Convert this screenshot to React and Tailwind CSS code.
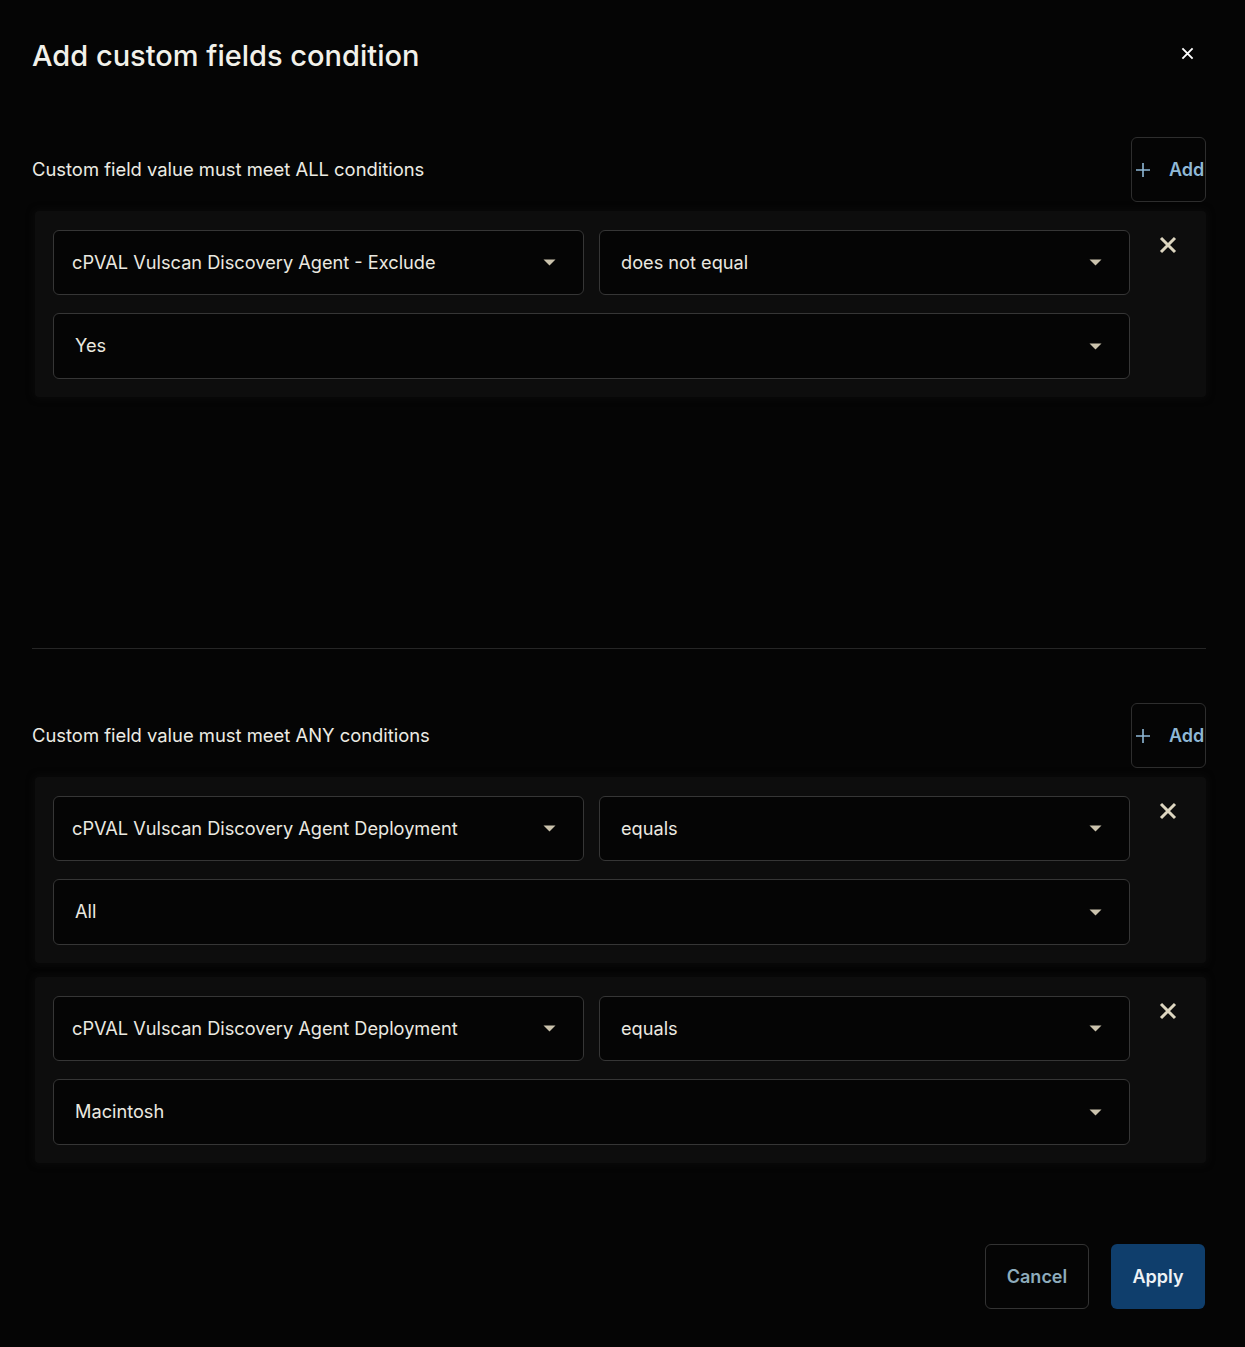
import React from 'react';

const font = { fontFamily: 'Inter, "Noto Sans", sans-serif' };

function Caret() {
  return (
    <svg width="13" height="7" viewBox="0 0 13 7" className="shrink-0">
      <path d="M0.5 0.5 H12.5 L6.5 6.5 Z" fill="#cbc3ad" />
    </svg>
  );
}

function Cross({ size = 18, stroke = 3, color = '#ddd6c0' }) {
  return (
    <svg width={size} height={size} viewBox="0 0 18 18">
      <path d="M2 2 L16 16 M16 2 L2 16" stroke={color} strokeWidth={stroke} strokeLinecap="butt" />
    </svg>
  );
}

function Select({ label, pad = 'pl-[21px]', className = '' }) {
  return (
    <div
      className={`flex items-center justify-between ${pad} pr-[27px] bg-[#050505] border border-[#363636] rounded-[6px] ${className}`}
    >
      <span className="text-[18.2px] text-[#ebe9e0]">{label}</span>
      <Caret />
    </div>
  );
}

function ConditionCard({ field, op, value }) {
  return (
    <div className="ml-[3px] bg-[#0d0d0d] rounded-[4px] shadow-[0_0_6px_2px_#0a0a0a] flex">
      <div className="flex-1 pt-[19px] pb-[18px] pl-[18px] flex flex-col gap-[18px]">
        <div className="grid grid-cols-2 gap-[15px]">
          <Select label={field} pad="pl-[18px]" className="h-[65px]" />
          <Select label={op} className="h-[65px]" />
        </div>
        <Select label={value} className="h-[66px]" />
      </div>
      <div className="w-[76px] flex justify-center pt-[25px]">
        <button className="h-[18px]">
          <Cross />
        </button>
      </div>
    </div>
  );
}

function SectionHeader({ title }) {
  return (
    <div className="flex items-center justify-between">
      <span className="text-[18.4px] text-[#ecebe3]">{title}</span>
      <button className="h-[65px] w-[75px] flex items-center gap-[18px] pl-[3px] border border-[#2e2e2e] rounded-[6px] overflow-visible">
        <svg width="16" height="16" viewBox="0 0 16 16" className="shrink-0">
          <path d="M8 1 V15 M1 8 H15" stroke="#8fb8d6" strokeWidth="1.6" />
        </svg>
        <span className="text-[18px] font-semibold text-[#8fb8d6] whitespace-nowrap">Add</span>
      </button>
    </div>
  );
}

export default function App() {
  return (
    <div style={font} className="w-[1245px] h-[1347px] bg-[#050505] pl-[32px] pr-[39px] pt-[38px]">
      <div className="flex items-center justify-between">
        <h1 className="text-[29px] font-medium text-[#f2f1ea] leading-[36px]">
          Add custom fields condition
        </h1>
        <button className="mr-[12px] mb-[6px] h-[13px]">
          <svg width="13" height="13" viewBox="0 0 14 14">
            <path d="M1.5 1.5 L12.5 12.5 M12.5 1.5 L1.5 12.5" stroke="#ffffff" strokeWidth="2" />
          </svg>
        </button>
      </div>

      <div className="mt-[63px] h-[512px] border-b border-[#262626] flex flex-col gap-[9px]">
        <SectionHeader title="Custom field value must meet ALL conditions" />
        <ConditionCard field="cPVAL Vulscan Discovery Agent - Exclude" op="does not equal" value="Yes" />
      </div>

      <div className="mt-[54px] flex flex-col gap-[9px]">
        <SectionHeader title="Custom field value must meet ANY conditions" />
        <div className="flex flex-col gap-[14px]">
          <ConditionCard field="cPVAL Vulscan Discovery Agent Deployment" op="equals" value="All" />
          <ConditionCard field="cPVAL Vulscan Discovery Agent Deployment" op="equals" value="Macintosh" />
        </div>
      </div>

      <div className="mt-[81px] flex justify-end gap-[22px] pr-[1px]">
        <button className="h-[65px] w-[104px] border border-[#333333] rounded-[6px] text-[18px] font-semibold text-[#8eacbc]">
          Cancel
        </button>
        <button className="h-[65px] w-[94px] bg-[#0f3e6c] rounded-[6px] text-[18px] font-semibold text-[#eef2f5]">
          Apply
        </button>
      </div>
    </div>
  );
}
